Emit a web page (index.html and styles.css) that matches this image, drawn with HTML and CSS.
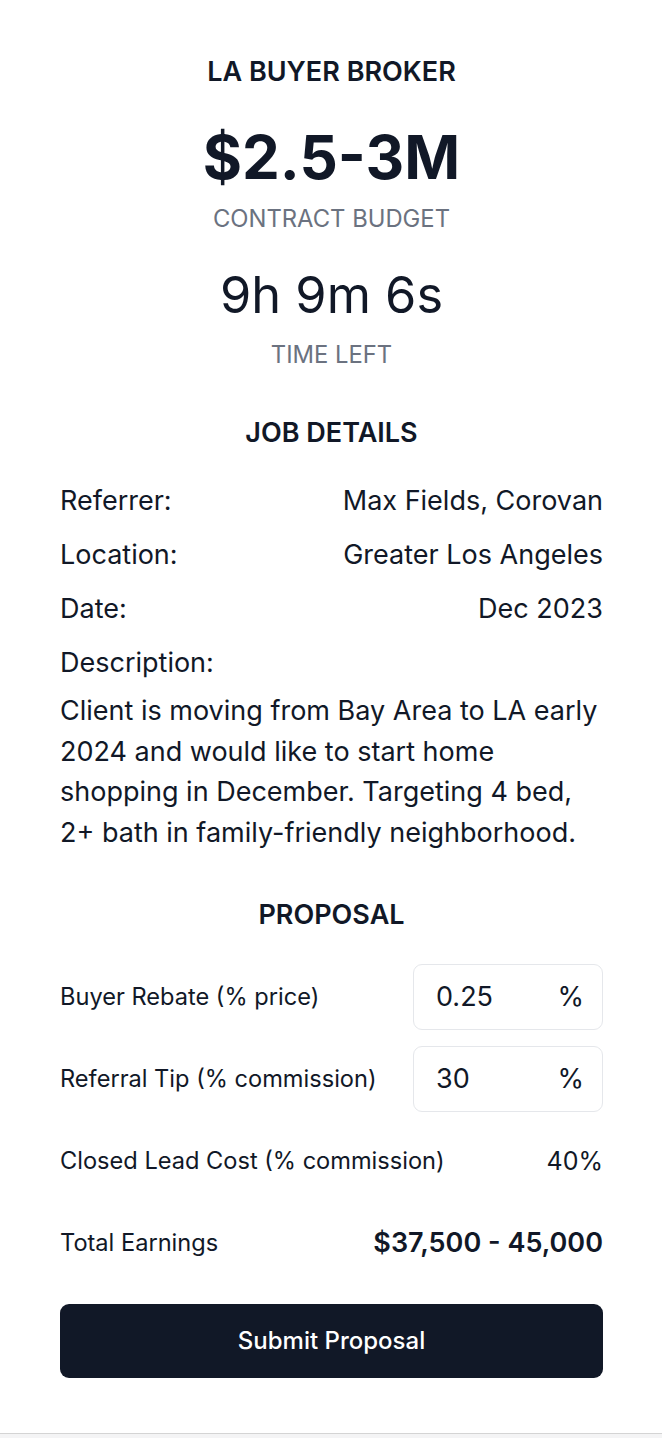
FILE: index.html
```html
<!DOCTYPE html>
<html lang="en">
<head>
<meta charset="utf-8">
<title>LA Buyer Broker</title>
<link rel="stylesheet" href="styles.css">
</head>
<body>
<main class="card">
  <header class="hero">
    <h1 class="title">LA BUYER BROKER</h1>
    <div class="price">$2.5-3M</div>
    <div class="caption caption-budget">CONTRACT BUDGET</div>
    <div class="timer">9h 9m 6s</div>
    <div class="caption">TIME LEFT</div>
  </header>

  <section class="details">
    <h2 class="section-title">JOB DETAILS</h2>
    <div class="rows">
      <div class="row"><span>Referrer:</span><span>Max Fields, Corovan</span></div>
      <div class="row"><span>Location:</span><span>Greater Los Angeles</span></div>
      <div class="row"><span>Date:</span><span>Dec 2023</span></div>
      <div class="row"><span>Description:</span></div>
    </div>
    <p class="desc">Client is moving from Bay Area to LA early 2024 and would like to start home shopping in December. Targeting 4 bed, 2+ bath in family-friendly neighborhood.</p>
  </section>

  <section class="proposal">
    <h2 class="section-title">PROPOSAL</h2>
    <div class="prop-rows">
      <div class="prop-row">
        <span class="prop-label">Buyer Rebate (% price)</span>
        <div class="field"><span>0.25</span><span>%</span></div>
      </div>
      <div class="prop-row">
        <span class="prop-label">Referral Tip (% commission)</span>
        <div class="field"><span>30</span><span>%</span></div>
      </div>
      <div class="prop-row">
        <span class="prop-label">Closed Lead Cost (% commission)</span>
        <span class="prop-value">40%</span>
      </div>
      <div class="prop-row">
        <span class="prop-label">Total Earnings</span>
        <span class="prop-total">$37,500 - 45,000</span>
      </div>
    </div>
    <button class="submit" type="button">Submit Proposal</button>
  </section>
</main>
</body>
</html>
```
FILE: styles.css
```css
* { box-sizing: border-box; }
html, body { margin: 0; padding: 0; }
body {
  background: #f4f4f5;
  font-family: Inter, "Noto Sans", sans-serif;
  color: #111827;
}
.card {
  background: #ffffff;
  border-bottom: 1px solid #d4d4d4;
  padding: 56px 59px 55px 60px;
}
.hero {
  display: flex;
  flex-direction: column;
  align-items: center;
  text-align: center;
}
.title {
  margin: 0;
  font-size: 27px;
  line-height: 32px;
  font-weight: 600;
}
.price {
  margin-top: 37px;
  font-size: 60px;
  line-height: 64px;
  font-weight: 700;
}
.caption {
  font-size: 23.8px;
  line-height: 30px;
  color: #6b7280;
  margin-top: 17px;
}
.caption-budget { margin-top: 15px; }
.timer {
  margin-top: 33px;
  font-size: 50.5px;
  line-height: 56px;
  font-weight: 400;
}
.section-title {
  margin: 0;
  text-align: center;
  font-size: 27px;
  line-height: 32px;
  font-weight: 600;
}
.details { margin-top: 47px; }
.rows {
  margin-top: 34px;
  display: flex;
  flex-direction: column;
  gap: 18px;
}
.row {
  display: flex;
  justify-content: space-between;
  font-size: 27px;
  line-height: 36px;
}
.desc {
  margin: 10px 0 0;
  font-size: 27px;
  line-height: 40.7px;
}
.proposal { margin-top: 45px; }
.prop-rows {
  margin-top: 33px;
  display: flex;
  flex-direction: column;
  gap: 16px;
}
.prop-row {
  height: 66px;
  display: flex;
  align-items: center;
  justify-content: space-between;
  font-size: 23.6px;
}
.field {
  width: 190px;
  height: 66px;
  border: 1.5px solid #e5e7eb;
  border-radius: 9px;
  display: flex;
  align-items: center;
  justify-content: space-between;
  padding: 0 18px 0 22px;
  font-size: 27px;
}
.prop-value { font-size: 25px; }
.prop-total { font-size: 27px; font-weight: 600; }
.submit {
  display: block;
  width: 100%;
  margin-top: 28px;
  height: 74px;
  border: 0;
  border-radius: 9px;
  background: #111827;
  color: #ffffff;
  font-family: Inter, "Noto Sans", sans-serif;
  font-size: 24px;
  font-weight: 500;
}
```
